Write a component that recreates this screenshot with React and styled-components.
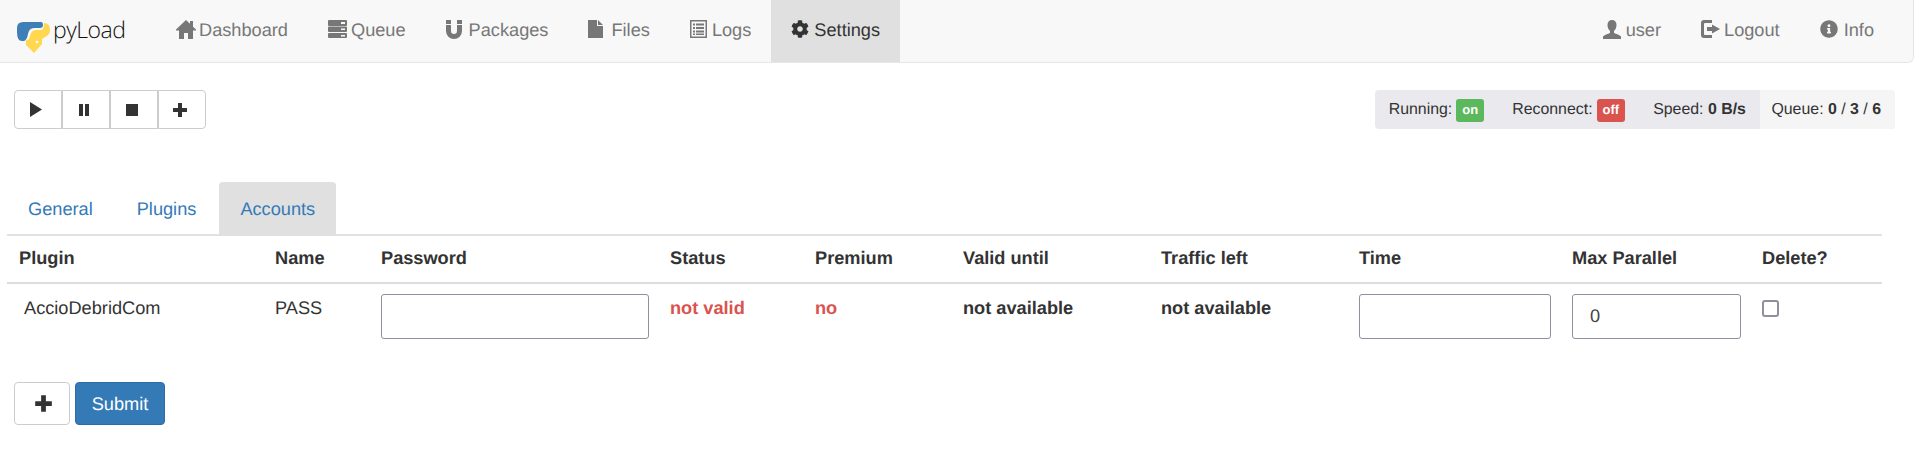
import React from "react";
import styled, { createGlobalStyle } from "styled-components";
import { FaCog, FaInfoCircle } from "react-icons/fa";

const Global = createGlobalStyle`
  html, body { margin: 0; padding: 0; background: #fff; }
  body { font-family: "Liberation Sans", Arial, sans-serif; font-size: 18.2px; line-height: 26px; color: #333; text-rendering: geometricPrecision; }
  * { box-sizing: border-box; }
`;

const Navbar = styled.nav`
  display: flex; justify-content: space-between; height: 63px;
  background: #f8f8f8; border-bottom: 1px solid #e7e7e7; border-radius: 0 0 6px 0; border-right: 1px solid #e7e7e7;
`;
const NavLeft = styled.div`display: flex;`;
const Brand = styled.div`
  display: flex; align-items: center; width: 156px; padding: 12px 0 0 17px; gap: 2px;
`;
const BrandText = styled.span`
  font-family: "Open Sans", sans-serif; font-size: 23px; color: #111; font-weight: 300; letter-spacing: -0.5px; margin-top: -16px;
`;
const NavItem = styled.a`
  display: flex; align-items: center; gap: ${p => p.$gap ?? 4}px; height: 62px; padding: 0 20px 2px;
  color: ${p => (p.$active ? "#333" : "#777")};
  background: ${p => (p.$active ? "#e0e0e0" : "transparent")};
  svg { display: block; fill: currentColor; margin-top: -2px; }
`;
const NavRight = styled.div`display: flex; margin-right: 19px;`;

const Toolbar = styled.div`
  display: flex; justify-content: space-between; align-items: flex-start; padding: 27px 19px 0 14px;
`;
const BtnGroup = styled.div`display: flex;`;
const IconBtn = styled.button`
  display: flex; align-items: center; justify-content: center;
  width: 48px; height: 39px; padding: 0 4px 0 0; background: #fff; border: 1px solid #ccc; color: #333;
  border-radius: ${p => (p.$first ? "4px 0 0 4px" : p.$last ? "0 4px 4px 0" : "0")};
  svg { fill: currentColor; display: block; }
`;
const StatusBar = styled.div`
  display: flex; height: 39px; font-size: 15.9px; border-radius: 4px; overflow: hidden; background: #e9e9ee;
`;
const StatusItem = styled.div`
  display: flex; align-items: center; gap: 4px; padding: ${p => p.$pad};
  background: ${p => p.$light ? "#f5f5f5" : "transparent"};
  b { font-weight: 700; }
`;
const Label = styled.span`
  display: inline-flex; align-items: center; justify-content: center; height: 23px; padding: 0 6px;
  border-radius: 3px; color: #fff; font-weight: 700; font-size: 13px;
  background: ${p => p.$kind === "on" ? "#5cb85c" : "#d9534f"};
`;

const Tabs = styled.ul`
  list-style: none; display: flex; gap: 2px; margin: 53px 32px 0 7px; padding: 0; border-bottom: 2px solid #e2e2e2; height: 54px;
`;
const Tab = styled.li`
  height: 54px; padding: 14px 21px 0; color: #337ab7; border-radius: 4px 4px 0 0;
  background: ${p => p.$active ? "#e0e0e0" : "transparent"};
`;

const Table = styled.table`
  display: table; table-layout: fixed; border-collapse: collapse; margin: 0 0 0 7px; width: 1875px;
`;
const Th = styled.th`
  text-align: left; font-weight: 700; padding: 8.500px 12px 10.500px; border-bottom: 2px solid #ddd; height: 47px;
`;
const Td = styled.td`
  vertical-align: top; padding: 11px 12px 8px; font-weight: ${p => p.$bold ? 700 : 400};
  color: ${p => p.$red ? "#d9534f" : "#333"};
  padding-left: ${p => p.$indent ? "17px" : "12px"};
`;
const TextInput = styled.input`
  display: block; width: ${p => p.$w}px; height: 45px; margin-top: -1px; padding: 0 17px; border: 1px solid #8f8f9d; border-radius: 3px; background: #fff;
  font: 18.2px "Liberation Sans", sans-serif; color: #444; outline: none; text-rendering: geometricPrecision;
`;
const Check = styled.input`
  appearance: none; display: block; width: 17px; height: 17px; margin: 5px 0 0 0; border: 2px solid #8f8f9d; border-radius: 3px; background: #fff;
`;
const Actions = styled.div`display: flex; gap: 5px; padding: 0 0 0 14px; margin-top: 35px;`;
const AddBtn = styled.button`
  display: flex; align-items: center; justify-content: center; width: 56px; height: 43px; padding: 0 0 0 2px;
  background: #fff; border: 1px solid #ccc; border-radius: 4px; color: #333;
  svg { fill: currentColor; display: block; }
`;
const Submit = styled.button`
  height: 43px; width: 90px; padding: 1px 0 0; background: #337ab7; border: 1px solid #2e6da4; border-radius: 4px; color: #fff;
  font: 18.2px "Liberation Sans", sans-serif; text-rendering: geometricPrecision;
`;

const Logo = () => (
  <svg width="34" height="35" viewBox="0 0 34 35">
    <path fill="#3f7fb8" d="M6 2H24Q26 2 26 5Q26 8 23 8H17Q12 8 11 14Q10 20 7 21H5Q0 21 0 12V8Q0 2 6 2Z" />
    <path fill="#ffd84f" d="M27 3Q33 3 33 10Q33 15 28 17L25 19V24L17 33L9 25V20Q12 21 13 16Q14 10 19 10H24Q27 10 27 3Z" />
    <circle cx="20" cy="22" r="1.3" fill="#fff" />
  </svg>
);
const PlusIcon = ({ size = 16 }) => (
  <svg width={size} height={size} viewBox="0 0 16 16"><path d="M6 1h4v5h5v4h-5v5H6v-5H1V6h5z" /></svg>
);
const HomeIcon = () => (
  <svg width="20" height="19" viewBox="0 0 20 19">
    <path d="M10 0l4 3.800V1h3v5.700L20 9.500v1h-3V19h-5v-6H8v6H3v-8.500H0v-1z" />
  </svg>
);
const ServerIcon = () => (
  <svg width="19" height="18" viewBox="0 0 19 18">
    <path fillRule="evenodd" d="M1 0h17a1 1 0 0 1 1 1v4a1 1 0 0 1-1 1H1a1 1 0 0 1-1-1V1a1 1 0 0 1 1-1zm12 2v2h4V2zM1 6.500h17a1 1 0 0 1 1 1V11a1 1 0 0 1-1 1H1a1 1 0 0 1-1-1V7.500a1 1 0 0 1 1-1zm12 2V10h4V8.500zM1 13h17a1 1 0 0 1 1 1v3a1 1 0 0 1-1 1H1a1 1 0 0 1-1-1v-3a1 1 0 0 1 1-1zm12 2v1.500h4V15z" />
  </svg>
);
const MagnetIcon = () => (
  <svg width="16" height="19" viewBox="0 0 16 19">
    <path d="M0 0h5v4H0zM11 0h5v4h-5zM0 5h5v6a3 3 0 0 0 6 0V5h5v6a8 8 0 0 1-16 0z" />
  </svg>
);
const FileIcon = () => (
  <svg width="15" height="18" viewBox="0 0 15 18">
    <path d="M0 0h9v6h6v12H0zM10 0l5 5h-5z" />
  </svg>
);
const ListIcon = () => (
  <svg width="17" height="18" viewBox="0 0 17 18">
    <path fillRule="evenodd" d="M0 0h17v18H0zM1.500 1.500v15h14v-15zM3 3.500h2v2H3zM6 3.500h8v2H6zM3 7h2v2H3zM6 7h8v2H6zM3 10.500h2v2H3zM6 10.500h8v2H6zM3 13.500h2V15H3zM6 13.500h8V15H6z" />
  </svg>
);
const UserIcon = () => (
  <svg width="18" height="19" viewBox="0 0 18 19">
    <path d="M9 0c3 0 4.500 2 4.500 5 0 2.500-1 4.500-2.500 6v2c2 1 6 2 7 3.500V19H0v-2.500C1 15 5 14 7 13v-2C5.500 9.500 4.500 7.500 4.500 5c0-3 1.500-5 4.500-5z" />
  </svg>
);
const LogoutIcon = () => (
  <svg width="19" height="18" viewBox="0 0 19 18">
    <path d="M3 0h8v3H4a1 1 0 0 0-1 1v10a1 1 0 0 0 1 1h7v3H3a3 3 0 0 1-3-3V3a3 3 0 0 1 3-3zM11 4.500l8 4.500-8 4.500V11H6V7h5z" />
  </svg>
);

const columns = [256, 106, 289, 145, 148, 198, 198, 213, 190, 132];
const headers = ["Plugin", "Name", "Password", "Status", "Premium", "Valid until", "Traffic left", "Time", "Max Parallel", "Delete?"];

export default function App() {
  return (
    <>
      <Global />
      <Navbar>
        <NavLeft>
          <Brand><Logo /><BrandText>pyLoad</BrandText></Brand>
          <NavItem $gap={3}><HomeIcon />Dashboard</NavItem>
          <NavItem $gap={4}><ServerIcon />Queue</NavItem>
          <NavItem $gap={7}><MagnetIcon />Packages</NavItem>
          <NavItem $gap={8}><FileIcon />Files</NavItem>
          <NavItem $gap={5}><ListIcon />Logs</NavItem>
          <NavItem $active $gap={5}><FaCog size={18} />Settings</NavItem>
        </NavLeft>
        <NavRight>
          <NavItem $gap={5}><UserIcon />user</NavItem>
          <NavItem $gap={4}><LogoutIcon />Logout</NavItem>
          <NavItem $gap={6}><FaInfoCircle size={18} />Info</NavItem>
        </NavRight>
      </Navbar>
      <Toolbar>
        <BtnGroup>
          <IconBtn $first aria-label="Play"><svg width="14" height="15" viewBox="0 0 14 15"><path d="M1 0l12 7.500L1 15z" /></svg></IconBtn>
          <IconBtn aria-label="Pause"><svg width="12" height="12" viewBox="0 0 12 12"><path d="M1 0h4v12H1zM7 0h4v12H7z" /></svg></IconBtn>
          <IconBtn aria-label="Stop"><svg width="12" height="12" viewBox="0 0 12 12"><path d="M0 0h12v12H0z" /></svg></IconBtn>
          <IconBtn $last aria-label="Add"><PlusIcon /></IconBtn>
        </BtnGroup>
        <StatusBar>
          <StatusItem $pad="1px 14px 0">Running: <Label $kind="on">on</Label></StatusItem>
          <StatusItem $pad="1px 14px 0">Reconnect: <Label $kind="off">off</Label></StatusItem>
          <StatusItem $pad="1px 14px 0"><span>Speed: <b>0 B/s</b></span></StatusItem>
          <StatusItem $light $pad="1px 14px 0 11.500px"><span>Queue: <b>0</b> / <b>3</b> / <b>6</b></span></StatusItem>
        </StatusBar>
      </Toolbar>
      <Tabs>
        <Tab>General</Tab>
        <Tab>Plugins</Tab>
        <Tab $active>Accounts</Tab>
      </Tabs>
      <Table>
        <colgroup>{columns.map((w, i) => <col key={i} style={{ width: w }} />)}</colgroup>
        <thead>
          <tr>{headers.map(h => <Th key={h}>{h}</Th>)}</tr>
        </thead>
        <tbody>
          <tr>
            <Td $indent>AccioDebridCom</Td>
            <Td>PASS</Td>
            <Td><TextInput type="text" $w={268} /></Td>
            <Td $bold $red>not valid</Td>
            <Td $bold $red>no</Td>
            <Td $bold>not available</Td>
            <Td $bold>not available</Td>
            <Td><TextInput type="text" $w={192} /></Td>
            <Td><TextInput type="text" $w={169} defaultValue="0" /></Td>
            <Td><Check type="checkbox" /></Td>
          </tr>
        </tbody>
      </Table>
      <Actions>
        <AddBtn aria-label="Add"><PlusIcon size={19} /></AddBtn>
        <Submit>Submit</Submit>
      </Actions>
    </>
  );
}
